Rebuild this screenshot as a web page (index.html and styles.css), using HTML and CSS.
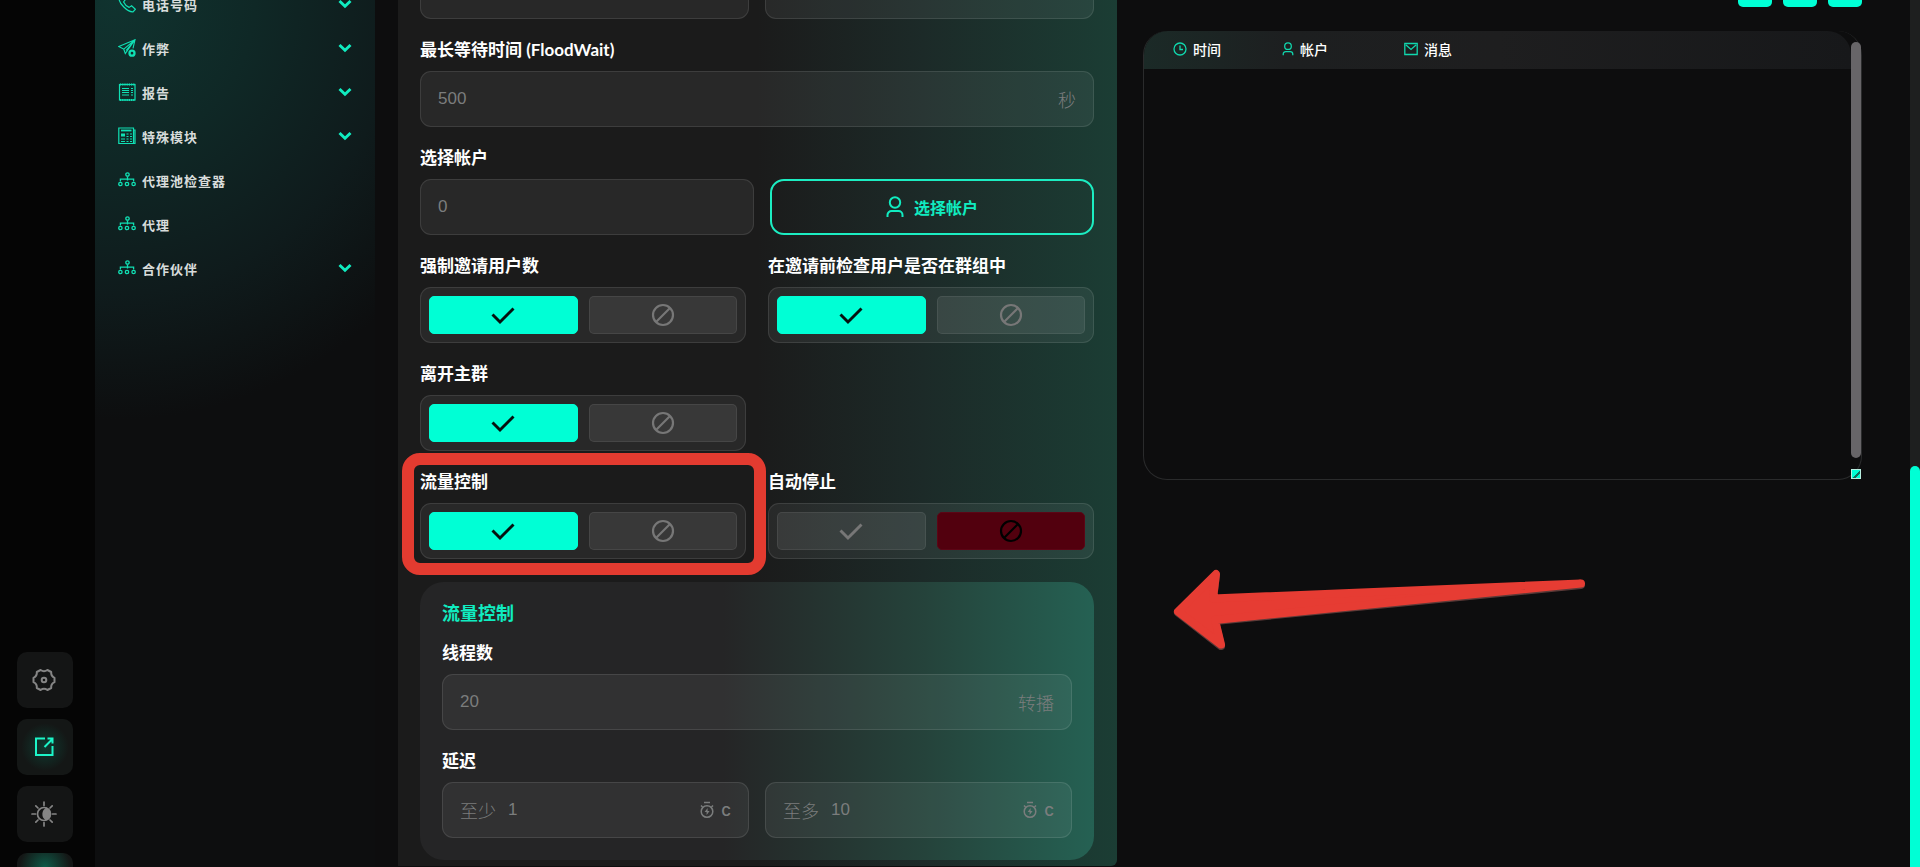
FILE: index.html
```html
<!DOCTYPE html>
<html lang="zh-CN">
<head>
    <meta charset="UTF-8">
    <meta name="viewport" content="width=device-width, initial-scale=1.0">
    <title>邀请设置</title>
    <link rel="stylesheet" href="styles.css">
</head>
<body>
    <svg class="symbols" aria-hidden="true">
        <symbol id="chevron" viewBox="0 0 14 10"><path d="M1.5 2 7 7.3 12.5 2" fill="none" stroke="currentColor" stroke-width="2.9"/></symbol>
        <symbol id="network" viewBox="0 0 18 18">
            <g fill="none" stroke="currentColor" stroke-width="1.3">
                <circle cx="9.500" cy="3.500" r="1.700"/><circle cx="2.400" cy="13" r="1.700"/><circle cx="9" cy="13" r="1.700"/><circle cx="15.600" cy="13" r="1.700"/>
                <path d="M9.500 5.500v4M2.400 10.500V8.100h13.200v2.400"/>
            </g>
        </symbol>
        <symbol id="user" viewBox="0 0 18 22">
            <g fill="none" stroke="currentColor" stroke-width="2"><circle cx="9" cy="6.500" r="5.200"/><path d="M1.500 21v-2a4 4 0 0 1 4-4h7a4 4 0 0 1 4 4v2"/></g>
        </symbol>
        <symbol id="check" viewBox="0 0 24 24"><path d="M1.500 11.500 9 19 22.500 5.500" fill="none" stroke="currentColor" stroke-width="2.900"/></symbol>
        <symbol id="ban" viewBox="0 0 24 24"><g fill="none" stroke="currentColor" stroke-width="2.200"><circle cx="12" cy="12" r="10"/><path d="M5 19 19 5"/></g></symbol>
        <symbol id="timer" viewBox="0 0 16 18">
            <g fill="none" stroke="currentColor" stroke-width="1.500"><circle cx="8" cy="10.500" r="5.800"/><path d="M5 1.500h6M2 4.500 3.500 6M14 4.500 12.500 6"/></g>
            <path d="M8.600 7 5.600 11h2v3l3-4h-2z" fill="currentColor"/>
        </symbol>
    </svg>

    <aside class="rail">
        <button class="rail-btn" type="button" aria-label="设置">
            <svg width="26" height="26" viewBox="-13 -13 26 26" fill="none" stroke="currentColor" stroke-width="2" stroke-linejoin="round"><path d="M10.500-2.200V2.200Q6.700 4 7.200 8L3.400 10Q0 7.600-3.400 10L-7.200 8Q-6.700 4-10.500 2.200V-2.200Q-6.700-4-7.200-8L-3.400-10Q0-7.600 3.400-10L7.200-8Q6.700-4 10.500-2.200z"/><circle r="2.300"/></svg>
        </button>
        <button class="rail-btn active" type="button" aria-label="打开">
            <svg width="22" height="22" viewBox="0 0 22 22" fill="none" stroke="currentColor" stroke-width="2"><path d="M12 2.500H3v16.500h16.500v-9M11.500 11 19 3.500M14.500 2.500h5v5"/></svg>
        </button>
        <button class="rail-btn" type="button" aria-label="主题">
            <svg width="26" height="26" viewBox="0 0 26 26" fill="none" stroke="currentColor" stroke-width="1.700" stroke-linecap="round"><circle cx="13" cy="13" r="6.500"/><path d="M13 1v3.500M13 21.500V25M1 13h3.500M21.500 13H25M4.800 4.800l2.200 2.200M19 19l2.200 2.200M4.800 21.200 7 19M19 7l2.200-2.200"/><path d="M15.500 7.500A6 6 0 0 1 15 18.500 6.500 6.500 0 0 1 15.500 7.500z" fill="currentColor"/></svg>
        </button>
        <button class="rail-btn active glow" type="button" aria-label="更多"></button>
    </aside>

    <div class="content">
        <nav class="sidebar">
            <button class="nav-item" type="button">
                <svg class="nav-icon" viewBox="0 0 18 18" fill="none" stroke="currentColor" stroke-width="1.200"><path d="M3.500.8 1 3.200c-.3 5 8.500 14 14 13.600l2.400-2.600-3.800-3.500-2.500 1.700C9 11.500 6.500 9 5.600 7l1.800-2.500z"/></svg>
                <span>电话号码</span><svg class="chevron"><use href="#chevron"/></svg>
            </button>
            <button class="nav-item" type="button">
                <svg class="nav-icon" viewBox="0 0 18 18" fill="none" stroke="currentColor" stroke-width="1.100"><path d="M17 .8.8 7.500l5 2.700L17 .8l-2 8.500M5.800 10.200l1.500 4.300L17 .8 8 11.500"/><circle cx="14" cy="14.200" r="2.500" stroke-width="2.300"/></svg>
                <span>作弊</span><svg class="chevron"><use href="#chevron"/></svg>
            </button>
            <button class="nav-item" type="button">
                <svg class="nav-icon" viewBox="0 0 18 18" fill="none" stroke="currentColor"><rect x="1.500" y="1.500" width="15.500" height="15.500" stroke-width="1.200"/><path d="M2 1.500h15M2 17h15" stroke-width="2" stroke-dasharray="1.200 1"/><path d="M4 5.500h7M4 7.500h7M4 9.500h7M4 12h7M13 5.500h2M13 7.500h2M13 9.500h2M13 12h2" stroke-width="1"/></svg>
                <span>报告</span><svg class="chevron"><use href="#chevron"/></svg>
            </button>
            <button class="nav-item" type="button">
                <svg class="nav-icon" viewBox="0 0 18 18" fill="none" stroke="currentColor"><path d="M.8 1h14.700v15.500H.8zM15.500 3h1.500v13.500h-2" stroke-width="1.200"/><path d="M3 3.500h10.500" stroke-width="1.800"/><path d="M3 8h4" stroke-width="3"/><path d="M8.500 7h2M12 7h2M8.500 9.500h2M12 9.500h2M3 12h4M8.500 12h2M12 12h2M3 14.500h4M8.500 14.500h2M12 14.500h2" stroke-width="1.200"/></svg>
                <span>特殊模块</span><svg class="chevron"><use href="#chevron"/></svg>
            </button>
            <a class="nav-item" href="#proxy-pool"><svg class="nav-icon"><use href="#network"/></svg><span>代理池检查器</span></a>
            <a class="nav-item" href="#proxy"><svg class="nav-icon"><use href="#network"/></svg><span>代理</span></a>
            <button class="nav-item" type="button">
                <svg class="nav-icon"><use href="#network"/></svg><span>合作伙伴</span><svg class="chevron"><use href="#chevron"/></svg>
            </button>
        </nav>

        <form class="panel">
            <div class="row">
                <div class="input-box"><input type="text" aria-label="最小值"></div>
                <div class="input-box"><input type="text" aria-label="最大值"></div>
            </div>

            <div class="field">
                <label class="title" for="flood-wait">最长等待时间 (FloodWait)</label>
                <div class="input-box"><input type="text" id="flood-wait" placeholder="500"><span class="unit">秒</span></div>
            </div>

            <div class="field">
                <label class="title" for="accounts">选择帐户</label>
                <div class="row account-row">
                    <div class="input-box"><input type="text" id="accounts" placeholder="0"></div>
                    <button class="btn-outline" type="button"><svg width="18" height="22"><use href="#user"/></svg>选择帐户</button>
                </div>
            </div>

            <div class="toggles">
                <fieldset class="field">
                    <legend class="title">强制邀请用户数</legend>
                    <div class="toggle">
                        <label><input type="radio" name="force" aria-label="是" checked><svg><use href="#check"/></svg></label>
                        <label class="off"><input type="radio" name="force" aria-label="否"><svg><use href="#ban"/></svg></label>
                    </div>
                </fieldset>
                <fieldset class="field">
                    <legend class="title">在邀请前检查用户是否在群组中</legend>
                    <div class="toggle">
                        <label><input type="radio" name="in-group" aria-label="是" checked><svg><use href="#check"/></svg></label>
                        <label class="off"><input type="radio" name="in-group" aria-label="否"><svg><use href="#ban"/></svg></label>
                    </div>
                </fieldset>
                <fieldset class="field first-col">
                    <legend class="title">离开主群</legend>
                    <div class="toggle">
                        <label><input type="radio" name="leave" aria-label="是" checked><svg><use href="#check"/></svg></label>
                        <label class="off"><input type="radio" name="leave" aria-label="否"><svg><use href="#ban"/></svg></label>
                    </div>
                </fieldset>
                <fieldset class="field first-col marked">
                    <legend class="title">流量控制</legend>
                    <div class="toggle">
                        <label><input type="radio" name="flow" aria-label="是" checked><svg><use href="#check"/></svg></label>
                        <label class="off"><input type="radio" name="flow" aria-label="否"><svg><use href="#ban"/></svg></label>
                    </div>
                </fieldset>
                <fieldset class="field">
                    <legend class="title">自动停止</legend>
                    <div class="toggle">
                        <label><input type="radio" name="auto-stop" aria-label="是"><svg><use href="#check"/></svg></label>
                        <label class="off"><input type="radio" name="auto-stop" aria-label="否" checked><svg><use href="#ban"/></svg></label>
                    </div>
                </fieldset>
            </div>

            <section class="group">
                <h2>流量控制</h2>
                <div class="field">
                    <label class="title" for="threads">线程数</label>
                    <div class="input-box"><input type="text" id="threads" placeholder="20"><span class="unit">转播</span></div>
                </div>
                <fieldset class="field">
                    <legend class="title">延迟</legend>
                    <div class="row">
                        <div class="input-box">
                            <label class="prefix" for="delay-min">至少</label><input type="text" id="delay-min" placeholder="1">
                            <span class="unit seconds"><svg width="16" height="18"><use href="#timer"/></svg>с</span>
                        </div>
                        <div class="input-box">
                            <label class="prefix" for="delay-max">至多</label><input type="text" id="delay-max" placeholder="10">
                            <span class="unit seconds"><svg width="16" height="18"><use href="#timer"/></svg>с</span>
                        </div>
                    </div>
                </fieldset>
            </section>
        </form>

        <main class="log-column">
            <div class="actions">
                <button type="button" aria-label="开始"></button>
                <button type="button" aria-label="停止"></button>
                <button type="button" aria-label="清除"></button>
            </div>
            <div class="log">
                <table>
                    <thead>
                        <tr>
                            <th class="time"><span><svg width="14" height="14" viewBox="0 0 14 14" fill="none" stroke="currentColor" stroke-width="1.300"><circle cx="7" cy="7" r="6"/><path d="M7 3.500V7.500h3"/></svg>时间</span></th>
                            <th class="account"><span><svg width="12" height="14"><use href="#user"/></svg>帐户</span></th>
                            <th><span><svg width="14" height="14" viewBox="0 0 14 14" fill="none" stroke="currentColor" stroke-width="1.300"><path d="M.8 1.500h12.400v11H.8zM2 3l5 4.500L12 3"/></svg>消息</span></th>
                        </tr>
                    </thead>
                </table>
                <div class="log-thumb"></div>
                <div class="resizer"></div>
            </div>
            <svg class="arrow" width="460" height="120" viewBox="0 0 460 120" stroke-width="8" stroke-linejoin="round">
                <path d="M28 62.500 66 25 63 49.500 431 35 65 71 71 96z" fill="#5b3a38" stroke="#5b3a38"/>
                <path d="M28 61.500 66 24 63 48.500 431 33.500 65 70 71 94.500z" fill="#e63c33" stroke="#e63c33"/>
            </svg>
        </main>
    </div>

    <div class="page-scroll"><div class="page-thumb"></div></div>
</body>
</html>
```

FILE: styles.css
```css
* {
    box-sizing: border-box;
}

body {
    margin: 0;
    height: 100vh;
    display: flex;
    overflow: hidden;
    background-color: #0d0d0e;
    color: #fff;
    font-family: "Lato", "Noto Sans CJK SC", sans-serif;
}

button,
input {
    font-family: inherit;
}

button {
    cursor: pointer;
}

.symbols {
    position: absolute;
    width: 0;
    height: 0;
}

/* left icon rail */
.rail {
    flex: 0 0 95px;
    display: flex;
    flex-direction: column;
    justify-content: flex-end;
    gap: 11px;
    padding-left: 17px;
    margin-bottom: -42px;
    background-color: #050505;
}

.rail-btn {
    width: 56px;
    height: 56px;
    flex-shrink: 0;
    display: flex;
    align-items: center;
    justify-content: center;
    padding: 0 2px 0 0;
    border: none;
    border-radius: 10px;
    background-color: #141515;
    color: #858585;
}

.rail-btn.active {
    background: radial-gradient(circle, #0f3a30 0%, #141716 60%);
    color: #1cf5c8;
}

.rail-btn.glow {
    background: radial-gradient(circle at 50% 25%, #0f5a48 0%, #141716 50%);
}

/* content is scrolled down, its top is above the window */
.content {
    flex: 1;
    display: grid;
    grid-template-columns: 303px minmax(0, 719fr) minmax(0, 793fr);
    align-items: start;
    min-width: 0;
    margin-top: -60px;
}

.sidebar {
    align-self: stretch;
    padding: 42px 23px 0;
    margin-right: 23px;
    background: radial-gradient(ellipse 400px 420px at 20px 60px, #10332f 0%, #0f2826 35%, #0f1b1c 70%, #0d0e0f 100%);
}

.nav-item {
    width: 100%;
    height: 44px;
    display: flex;
    align-items: center;
    padding: 0;
    border: none;
    background: none;
    color: #d8dcdb;
    font-size: 13px;
    font-weight: bold;
    letter-spacing: 1px;
    text-decoration: none;
}

.nav-icon {
    width: 18px;
    height: 18px;
    margin-right: 6px;
    color: #10e0b4;
}

.chevron {
    width: 14px;
    height: 10px;
    margin-left: auto;
    color: #10ecc0;
}

/* settings form */
.panel {
    padding: 23px 23px 6px 22px;
    border-radius: 0 0 6px 0;
    background: linear-gradient(90deg, #1b1b1b 0%, #1b1b1b 50%, #1c2a28 73%, #1b3d34 100%);
}

.field {
    min-width: 0;
    margin: 20px 0 0;
    padding: 0;
    border: none;
}

.title {
    display: block;
    height: 22px;
    margin-bottom: 10px;
    padding: 0;
    font-size: 17px;
    font-weight: bold;
    line-height: 22px;
}

.row {
    display: grid;
    grid-template-columns: repeat(2, minmax(0, 1fr));
    gap: 16px;
}

.account-row {
    grid-template-columns: 334fr 324fr;
}

.input-box {
    height: 56px;
    display: flex;
    align-items: center;
    padding: 0 17px;
    border: 1px solid rgba(255, 255, 255, 0.1);
    border-radius: 11px;
    background-color: rgba(255, 255, 255, 0.06);
    color: #7b7d7d;
}

.input-box input {
    flex: 1;
    min-width: 0;
    height: 100%;
    padding: 0;
    border: none;
    outline: none;
    background: none;
    color: #ddd;
    font-family: "Liberation Sans", Arial, sans-serif;
    font-size: 17px;
}

.input-box input::placeholder {
    color: #7b7d7d;
}

.prefix,
.unit {
    font-size: 18px;
    font-weight: 300;
}

.prefix {
    margin-right: 12px;
}

.unit {
    display: flex;
    align-items: center;
    gap: 6px;
}

.seconds {
    font-family: "Inter", sans-serif;
    font-weight: 500;
    font-size: 17px;
}

.btn-outline {
    display: flex;
    align-items: center;
    justify-content: center;
    gap: 10px;
    border: 2px solid #1cedc2;
    border-radius: 14px;
    background: none;
    color: #10ecc0;
    font-size: 16px;
    font-weight: bold;
}

.toggles {
    display: grid;
    grid-template-columns: 1fr 1fr;
    column-gap: 22px;
}

.first-col {
    grid-column: 1;
}

.toggle {
    height: 56px;
    display: flex;
    gap: 11px;
    padding: 8px;
    border: 1px solid rgba(255, 255, 255, 0.1);
    border-radius: 11px;
    background-color: rgba(255, 255, 255, 0.06);
}

.toggle label {
    flex: 1;
    display: flex;
    align-items: center;
    justify-content: center;
    border: 1px solid rgba(255, 255, 255, 0.07);
    border-radius: 5px;
    background-color: rgba(255, 255, 255, 0.08);
    color: #777;
    cursor: pointer;
}

.toggle input {
    appearance: none;
    width: 0;
    height: 0;
    margin: 0;
}

.toggle svg {
    width: 24px;
    height: 24px;
}

.toggle label:has(:checked) {
    border-color: #00ffd5;
    background-color: #00ffd5;
    color: #06110f;
}

.toggle .off:has(:checked) {
    border-color: #5c0515;
    background-color: #52000e;
    color: #000;
}

/* red frame over the highlighted option */
.marked {
    position: relative;
}

.marked::after {
    content: "";
    position: absolute;
    top: -50px;
    right: -20px;
    bottom: -16px;
    left: -18px;
    border: 12px solid #e33b30;
    border-radius: 18px;
    pointer-events: none;
}

.group {
    margin-top: 23px;
    padding: 20px 22px 22px;
    border-radius: 24px;
    background: linear-gradient(90deg, #252526 0%, #252526 45%, #25433b 75%, #256153 100%);
}

.group h2 {
    margin: 0;
    color: #10ecc0;
    font-size: 18px;
    line-height: 22px;
}

.group h2 + .field {
    margin-top: 18px;
}

/* log table */
.log-column {
    margin: 33px 48px 0 26px;
}

.actions {
    display: flex;
    justify-content: flex-end;
    gap: 11px;
    margin-bottom: 24px;
}

.actions button {
    width: 34px;
    height: 34px;
    border: none;
    border-radius: 5px;
    background-color: #00ffd5;
}

.log {
    position: relative;
    height: 449px;
    border: 1px solid #2a2b2c;
    border-top: none;
    border-radius: 24px;
    background-color: #0d0d0e;
}

.log table {
    width: calc(100% - 10px);
    border-spacing: 0;
    table-layout: fixed;
    border-radius: 24px 24px 0 0;
    background: linear-gradient(90deg, #1b2a27 0%, #1d1f20 20%, #1e1e1f 50%, #17181a 100%);
}

.log th {
    height: 38px;
    padding: 0 0 2px;
    text-align: left;
    font-size: 14px;
    font-weight: 500;
}

.log th span {
    display: flex;
    align-items: center;
    gap: 6px;
}

.log th svg {
    color: #10d8ae;
}

.log .time {
    width: 138px;
    padding-left: 29px;
}

.log .account {
    width: 122px;
}

.log-thumb {
    position: absolute;
    top: 11px;
    right: 0;
    bottom: 21px;
    width: 10px;
    border-radius: 5px;
    background-color: #676568;
}

.resizer {
    position: absolute;
    right: 0;
    bottom: 0;
    width: 10px;
    height: 10px;
    border: 1px solid #b8eee0;
    background: linear-gradient(135deg, #00ffd5 55%, #146a5a 55%, #146a5a 75%, #00ffd5 75%);
}

.arrow {
    display: block;
    max-width: 100%;
    margin: 70px 0 0 7px;
}

.page-scroll {
    flex: 0 0 10px;
    padding-top: 466px;
    background-color: #1e1f1f;
}

.page-thumb {
    height: 100%;
    border-radius: 5px 5px 0 0;
    background-color: #00ffd5;
}
```
